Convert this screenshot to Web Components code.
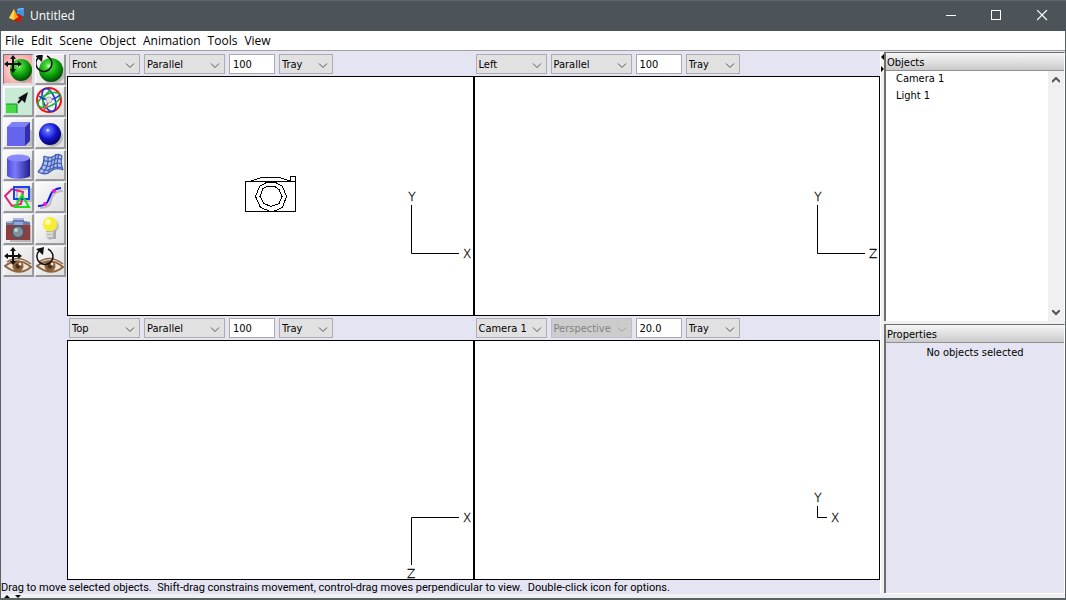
<!DOCTYPE html>
<html lang="en">
<head>
<meta charset="utf-8">
<title>Untitled</title>
<style>
html, body { height: 100%; margin: 0; }
body { font-family: "DejaVu Sans Condensed", "DejaVu Sans", sans-serif; font-size: 11px; color: #000; }
</style>
</head>
<body>
<modeler-app></modeler-app>
<script>
const define = (name, html, setup) => {
  const template = document.createElement('template');
  template.innerHTML = html;
  customElements.define(name, class extends HTMLElement {
    constructor() {
      super();
      this.attachShadow({ mode: 'open' }).append(template.content.cloneNode(true));
    }
    connectedCallback() { if (setup) setup(this, this.shadowRoot); }
  });
};

define('title-bar', `
<style>
:host { display: flex; align-items: center; height: 31px; background: #4c545a; color: #fff; font-family: "Open Sans", "Noto Sans", sans-serif; font-size: 12px; box-shadow: inset 0 1px #5d656b; }
.logo { width: 16px; height: 16px; margin: 0 5px 0 9px; }
h1 { flex: 1; margin: 0; font: inherit; line-height: 16px; }
button { display: grid; place-items: center; width: 46px; height: 30px; padding: 0; border: 0; background: none; color: inherit; }
</style>
<svg class="logo" viewBox="0 0 16 16" aria-hidden="true">
  <path d="M8 1l6-1 1 1v7l-7 1z" fill="#3d94ea"/><path d="M8 1l6-1 1 1-6 1z" fill="#87c3ff"/>
  <circle cx="9" cy="10" r="4" fill="#c91c0b"/><circle cx="8" cy="9" r="1" fill="#ff8b66"/>
  <path d="M5 1L0 10l5 2 4-3z" fill="#f8aa16"/><path d="M5 1L0 10l5 2z" fill="#ffd548"/>
</svg>
<h1><slot></slot></h1>
<button aria-label="Minimize"><svg width="12" height="12"><path d="M1 5.500h10" stroke="currentColor"/></svg></button>
<button aria-label="Maximize"><svg width="12" height="12"><rect x=".5" y=".5" width="9" height="9" fill="none" stroke="currentColor"/></svg></button>
<button aria-label="Close"><svg width="12" height="12"><path d="M0 0l10 10M10 0L0 10" stroke="currentColor" stroke-width="1.200"/></svg></button>
`);

define('menu-bar', `
<style>
:host { display: block; background: #fff; border-bottom: 1px solid #a0a0a0; font-family: "Open Sans", "Noto Sans", sans-serif; font-size: 12px; }
nav { display: flex; gap: 7px; height: 19px; padding-left: 4px; }
button { padding: 0; border: 0; background: none; font: inherit; line-height: 19px; color: #000; }
</style>
<nav aria-label="Main menu"><button>File</button><button>Edit</button><button>Scene</button><button>Object</button><button>Animation</button><button>Tools</button><button>View</button></nav>
`);

const cross = (x, y) => `<g transform="translate(${x} ${y})"><path d="M-7 0H7M0-7V7" stroke="#111" stroke-width="2"/><path d="M-9 0l4-3v6zM9 0l-4-3v6zM0-9l-3 4h6zM0 9l-3-4h6z" fill="#111"/></g>`;
const turn = (x, y) => `<g transform="translate(${x} ${y})"><path d="M-6-5A8 8 0 1 0 3-7" fill="none" stroke="#111" stroke-width="1.500"/><path d="M-9-7l8-2-1 8z" fill="#111"/></g>`;
const ball = (x, y, r, a, b, c) => `<defs><radialGradient id="b" cx=".4" cy=".33" r=".65"><stop offset="0" stop-color="#fff"/><stop offset=".15" stop-color="${a}"/><stop offset=".6" stop-color="${b}"/><stop offset="1" stop-color="${c}"/></radialGradient></defs><ellipse cx="${x + 2}" cy="${y + 3}" rx="${r}" ry="${r - 1}" fill="#999" opacity=".55"/><circle cx="${x}" cy="${y}" r="${r}" fill="url(#b)"/>`;
const eye = `<path d="M2 20Q15 10 28 21Q16 31 2 20z" fill="#eee3d8" stroke="#8f6540" stroke-width="2"/><path d="M4 16Q15 8 28 18" fill="none" stroke="#8f6540" stroke-width="1.500"/><circle cx="15" cy="20" r="5.500" fill="#8c603a"/><circle cx="15" cy="20" r="2.500" fill="#4a2f1c"/><circle cx="17" cy="18" r="1.500" fill="#efe2d4"/>`;
const icons = {
  move: ball(18, 16, 11, '#55dd42', '#0ca50c', '#045404') + cross(10, 10),
  rotate: ball(16, 16, 12, '#55dd42', '#0ca50c', '#045404') + turn(9, 9),
  scale: `<path d="M2 2h27v27H2z" fill="#c9ebd6"/><path d="M3 18h11v9H3z" fill="#46d846"/><path d="M3 18h11v9" fill="none" stroke="#168c25"/><path d="M15 17l6-7" stroke="#111" stroke-width="2"/><path d="M25 6l-3 11-3-3-4-2z" fill="#111"/>`,
  trackball: `<circle cx="14" cy="14" r="12" fill="#f2f2f2" stroke="#ee1414" stroke-width="2"/><g fill="none" stroke-width="1.600"><ellipse cx="14" cy="14" rx="6" ry="12" stroke="#1833df" transform="rotate(-20 14 14)"/><ellipse cx="14" cy="14" rx="12" ry="6" stroke="#20b03c" transform="rotate(-25 14 14)"/><path d="M16 4Q4 12 10 24" stroke="#20b03c"/><path d="M4 10Q14 18 25 9" stroke="#1833df"/><path d="M9 24l4-7" stroke="#f05050"/></g><circle cx="14" cy="14" r="3" fill="#ddd" stroke="#aaa"/>`,
  cube: `<path d="M8 12h21v16H8z" fill="#999" opacity=".5"/><path d="M4 9h18v19H4z" fill="#6464ec"/><path d="M4 9l5-5h18l-5 5z" fill="#8080f8"/><path d="M22 9l5-5v19l-5 5z" fill="#3030a8"/>`,
  sphere: ball(15, 16, 11, '#5c6cff', '#1515d2', '#05056a'),
  cylinder: `<defs><linearGradient id="c"><stop stop-color="#4e4ed8"/><stop offset=".35" stop-color="#7a7aff"/><stop offset="1" stop-color="#20208b"/></linearGradient></defs><path d="M8 10h21v18H8z" fill="#999" opacity=".5"/><path d="M4 8v17c0 5 23 5 23 0V8z" fill="url(#c)"/><ellipse cx="15.500" cy="8" rx="11.500" ry="3.500" fill="#8989fb"/>`,
  mesh: `<path d="M8 6q6 3 11 0q4-3 8 0q-3 9 1 12q-5-2-9 1q-8 7-16 3q6-7 5-16z" fill="#b7c3e8"/><g fill="none" stroke="#4361bb" stroke-width="1.300"><path d="M9 6q6 3 10 0q4-3 8 0M8 10q6 3 10 0q4-3 9 0M7 14q6 4 10 1q5-3 9-1M5 18q7 4 11 1q5-3 11-1M3 22q8 4 13-1q5-4 12-1"/><path d="M9 6q1 9-6 16M13 7q1 9-5 16M17 7q0 9-4 15M21 4q-2 10-3 15M24 4q-3 9-1 15M27 6q-2 7 1 14"/></g>`,
  polygon: `<g fill="none" stroke-width="2"><path d="M14 7h14v12H14z" stroke="#bbb"/><path d="M2 14l7-7 11 3-2 12-9 2z" stroke="#e51e78"/><path d="M11 5h15v12H11z" stroke="#1744ef"/><path d="M19 13l7 12H12z" stroke="#14e114"/></g>`,
  curve: `<path d="M5 26q10 0 11-7t6-9q3-1 6-1" fill="none" stroke="#bbb" stroke-width="2"/><path d="M3 24q8 0 10-5l3-7q2-5 10-6" fill="none" stroke="#1616e8" stroke-width="2"/><circle cx="10" cy="22" r="2" fill="#f317d6"/><circle cx="19" cy="9" r="2" fill="#f317d6"/>`,
  camera: `<path d="M7 11h21v17H7z" fill="#999" opacity=".6"/><path d="M3 9h24v17H3z" fill="#903d3d"/><path d="M3 8l7-1V5h11v2l6 1v3H3z" fill="#697ba8"/><path d="M10 5h11M4 8h5" stroke="#a9b8e4" stroke-width="2"/><path d="M11 8h9v3h-9z" fill="#8ea8e6"/><circle cx="15" cy="18" r="7" fill="#4e5663"/><circle cx="15" cy="18" r="5" fill="#81909a"/><circle cx="13" cy="16" r="2" fill="#c5d0d6"/>`,
  light: `<path d="M13 16h8v9h-5z" fill="#aaa"/><circle cx="17" cy="12" r="7" fill="#aaa" opacity=".6"/><path d="M8 10a7 7 0 0 1 14 0q0 4-4 7h-6q-4-3-4-7z" fill="#f7ed30"/><circle cx="13" cy="8" r="3" fill="#fffca5"/><path d="M11 17h8l-1 7-3 2-3-2z" fill="#b7b7b7"/><path d="M11 19h7M12 22h6" stroke="#fff"/>`,
  moveview: eye + cross(10, 10),
  turnview: eye + turn(10, 10)
};

define('tool-button', `
<style>
:host { display: block; width: 32px; height: 32px; }
button { display: block; box-sizing: border-box; width: 31px; height: 31px; padding: 0; border: solid; border-width: 1px 2px 2px 1px; border-color: #fff #999 #999 #fff; background: linear-gradient(135deg, #fafafa, #dedede); overflow: hidden; }
:host([pressed]) button { border-color: #777 #ddd #ddd #777; background: radial-gradient(#ffeded, #f59a9a); }
svg { display: block; margin: -1px; }
</style>
<button><svg width="32" height="32" viewBox="0 0 32 32" aria-hidden="true"></svg></button>
`, (host, root) => {
  const button = root.querySelector('button');
  button.setAttribute('aria-label', host.getAttribute('label'));
  button.setAttribute('aria-pressed', host.hasAttribute('pressed'));
  root.querySelector('svg').innerHTML = icons[host.getAttribute('icon')];
});

define('tool-palette', `
<style>
:host { display: grid; grid-template-columns: 32px 32px; align-content: start; padding: 2px 0 0 2px; }
</style>
<tool-button icon="move" label="Move" pressed></tool-button><tool-button icon="rotate" label="Rotate"></tool-button>
<tool-button icon="scale" label="Scale"></tool-button><tool-button icon="trackball" label="Move, rotate and scale"></tool-button>
<tool-button icon="cube" label="Create cube"></tool-button><tool-button icon="sphere" label="Create sphere"></tool-button>
<tool-button icon="cylinder" label="Create cylinder"></tool-button><tool-button icon="mesh" label="Create spline mesh"></tool-button>
<tool-button icon="polygon" label="Create polygon"></tool-button><tool-button icon="curve" label="Create curve"></tool-button>
<tool-button icon="camera" label="Create camera"></tool-button><tool-button icon="light" label="Create light"></tool-button>
<tool-button icon="moveview" label="Move viewpoint"></tool-button><tool-button icon="turnview" label="Rotate viewpoint"></tool-button>
`);

define('drop-down', `
<style>
:host { display: grid; height: 20px; }
select, svg { grid-area: 1 / 1; }
select { width: 100%; height: 20px; margin: 0; padding: 0 0 0 2px; border: 1px solid #adadad; border-radius: 0; appearance: none; background: #e1e1e1; font: inherit; color: #000; }
select:disabled { background: #ccc; border-color: #bfbfbf; color: #838383; opacity: 1; }
svg { place-self: center end; margin: 3px 5px 0 0; pointer-events: none; }
path { fill: none; stroke: #555; }
:host([disabled]) path { stroke: #a0a0a0; }
</style>
<select><option></option></select>
<svg width="10" height="6"><path d="M1 .5l4 4 4-4"/></svg>
`, (host, root) => {
  const select = root.querySelector('select');
  select.options[0].textContent = host.getAttribute('value');
  select.setAttribute('aria-label', host.getAttribute('label'));
  select.disabled = host.hasAttribute('disabled');
});

define('scene-view', `
<style>
:host { display: flex; flex-direction: column; min-width: 0; }
header { display: grid; grid-template-columns: 71px 81px 46px 54px; gap: 4px; align-items: center; height: 24px; padding-left: 2px; }
input { box-sizing: border-box; width: 100%; height: 20px; margin: 0; padding: 0 3px; border: 1px solid #aaa; background: #fff; font: inherit; color: #000; }
.canvas { flex: 1; display: grid; position: relative; min-height: 130px; border: 1px solid #000; background: #fff; }
.canvas > * { grid-area: 1 / 1; }
::slotted(*) { place-self: center; }
.axes { position: absolute; right: 0; bottom: 0; overflow: visible; font: 200 12px "DejaVu Sans", sans-serif; }
path { fill: none; stroke: #000; }
text { text-anchor: middle; stroke: #000; stroke-width: .3px; }
</style>
<header></header>
<div class="canvas"><slot></slot><svg class="axes" width="72" height="124" aria-hidden="true"></svg></div>
`, (host, root) => {
  const attr = name => host.getAttribute(name);
  root.querySelector('header').innerHTML = `
    <drop-down label="View" value="${attr('side')}"></drop-down>
    <drop-down label="Projection" value="${attr('kind')}" ${host.hasAttribute('locked') ? 'disabled' : ''}></drop-down>
    <input aria-label="Scale" value="${attr('scale')}">
    <drop-down label="Tray" value="Tray"></drop-down>`;
  root.querySelector('.axes').innerHTML = {
    yx: '<path d="M10.500 14v48.500H58"/><text x="11" y="10">Y</text><text x="66" y="67">X</text>',
    yz: '<path d="M10.500 14v48.500H58"/><text x="11" y="10">Y</text><text x="66" y="67">Z</text>',
    zx: '<path d="M10.500 110V62.500H58"/><text x="10" y="123">Z</text><text x="66" y="67">X</text>',
    small: '<path d="M10.500 51v11.500H20"/><text x="11" y="47">Y</text><text x="28" y="67">X</text>'
  }[attr('axes')];
});

define('side-panel', `
<style>
:host { display: flex; flex-direction: column; min-height: 0; border-left: 2px solid #6d6d6d; border-top: 1px solid #6d6d6d; border-right: 1px solid #fff; }
h2 { margin: 0; height: 17px; padding-left: 1px; border-bottom: 1px solid #909090; background: linear-gradient(#f6f6f6, #cacaca); font: inherit; line-height: 19px; }
div { flex: 1; min-height: 0; display: flex; flex-direction: column; }
</style>
<h2></h2><div><slot></slot></div>
`, (host, root) => { root.querySelector('h2').textContent = host.getAttribute('heading'); });

define('object-list', `
<style>
:host { flex: 1; display: flex; background: #fff; }
ul { flex: 1; display: grid; align-content: start; gap: 2px; margin: 0; padding: 0 0 0 10px; list-style: none; line-height: 15px; }
.scroll { display: flex; flex-direction: column; justify-content: space-between; width: 16px; background: #f0f0f0; }
button { display: grid; place-items: center; height: 17px; padding: 0; border: 0; background: none; }
path { fill: none; stroke: #555; stroke-width: 2; }
</style>
<ul><li>Camera 1</li><li>Light 1</li></ul>
<div class="scroll"><button aria-label="Scroll up"><svg width="8" height="6"><path d="M0 5l4-4 4 4"/></svg></button><button aria-label="Scroll down"><svg width="8" height="6"><path d="M0 0l4 4 4-4"/></svg></button></div>
`);

define('modeler-app', `
<style>
:host { display: flex; flex-direction: column; box-sizing: border-box; min-height: 100%; background: #e4e4f2; border: solid #596267; border-width: 0 1px 2px; }
title-bar { margin: 0 -1px; }
menu-bar { margin-bottom: 1px; }
main { flex: 1; display: grid; grid-template-columns: minmax(0, 1fr) 4px 181px; }
.work { display: flex; flex-direction: column; }
.editor { flex: 1; display: flex; }
.views { flex: 1; display: grid; grid-template: 1fr 1fr / 1fr 1fr; }
.status { margin: 0; height: 14px; font-family: Roboto, sans-serif; line-height: 15px; white-space: pre; }
.split { background: #f0f0f0; border-left: 1px solid #fff; }
.split svg { display: block; margin: 2px 0 0 -1px; }
aside { display: grid; grid-template-rows: 269px 1fr; row-gap: 3px; background: #f0f0f0; border-bottom: 1px solid #fff; }
side-panel { background: #e4e4f2; }
.message { margin: 0; text-align: center; line-height: 20px; }
footer { display: flex; height: 4px; background: #f0f0f0; }
footer svg { margin-left: 3px; }
</style>
<title-bar>Untitled</title-bar>
<menu-bar></menu-bar>
<main>
  <div class="work">
    <div class="editor">
      <tool-palette></tool-palette>
      <div class="views">
        <scene-view side="Front" kind="Parallel" scale="100" axes="yx">
          <svg width="52" height="42" viewBox="0 0 52 42" fill="none" stroke="#000" shape-rendering="crispEdges" role="img" aria-label="Camera 1"><path d="M1.500 6.500h50v30h-50zM7 6L19 2h15l12 4M46.500 6V1.500h5V6M26.500 36.500l-10-4-5-11 4-10 7-4h9l7 4 4 10-4 11-9 4zM27 31.500l-7-3-4-7 3-8 4-2h8l4 3 3 7-3 7z"/></svg>
        </scene-view>
        <scene-view side="Left" kind="Parallel" scale="100" axes="yz"></scene-view>
        <scene-view side="Top" kind="Parallel" scale="100" axes="zx"></scene-view>
        <scene-view side="Camera 1" kind="Perspective" scale="20.0" axes="small" locked></scene-view>
      </div>
    </div>
    <p class="status">Drag to move selected objects.  Shift-drag constrains movement, control-drag moves perpendicular to view.  Double-click icon for options.</p>
  </div>
  <div class="split"><svg width="4" height="18" aria-hidden="true"><path d="M4 0v6L1 3zM1 12v6l3-3z"/></svg></div>
  <aside>
    <side-panel heading="Objects"><object-list></object-list></side-panel>
    <side-panel heading="Properties"><p class="message">No objects selected</p></side-panel>
  </aside>
</main>
<footer><svg width="18" height="4" aria-hidden="true"><path d="M0 4l3-3 3 3zM11 1h6l-3 3z"/></svg></footer>
`);
</script>
</body>
</html>
